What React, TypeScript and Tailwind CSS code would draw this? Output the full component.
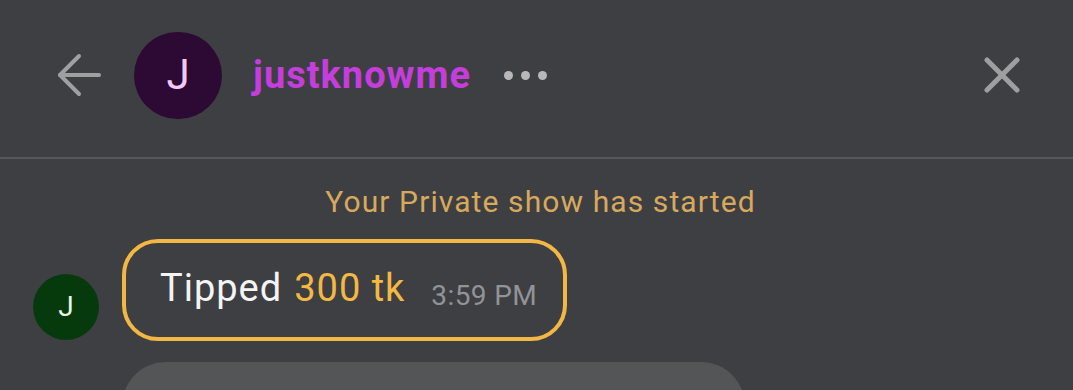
import React from "react";

const App: React.FC = () => {
  return (
    <div
      className="w-[1073px] h-[390px] overflow-hidden bg-[#3e3f43] flex flex-col"
      style={{ fontFamily: "Roboto, 'Liberation Sans', sans-serif" }}
    >
      {/* Header */}
      <div className="h-[157px] flex items-center pb-[7px] pl-[57px] pr-[53px] shrink-0">
        <svg width="44" height="44" viewBox="0 0 44 44" fill="none" stroke="#a0a0a2" strokeWidth="4" strokeLinecap="round" strokeLinejoin="round">
          <path d="M42 22H3" />
          <path d="M22 3L3 22l19 19" />
        </svg>
        <div className="ml-[33px] w-[88px] h-[87px] rounded-full bg-[#2c0a33] flex items-center justify-center text-[42px] leading-none text-[#f2c9f6]">
          J
        </div>
        <span className="ml-[31px] text-[38px] font-bold tracking-[1px] text-[#c63ddd] leading-none">
          justknowme
        </span>
        <div className="ml-[33px] flex gap-[8px]">
          <span className="w-[9px] h-[9px] rounded-full bg-[#b8b8ba]" />
          <span className="w-[9px] h-[9px] rounded-full bg-[#b8b8ba]" />
          <span className="w-[9px] h-[9px] rounded-full bg-[#b8b8ba]" />
        </div>
        <div className="flex-1" />
        <svg width="36" height="36" viewBox="0 0 36 36" fill="none" stroke="#9f9fa1" strokeWidth="5" strokeLinecap="round">
          <path d="M3 3l30 30" />
          <path d="M33 3L3 33" />
        </svg>
      </div>
      <div className="h-[2px] bg-[#56575b] shrink-0" />

      {/* Chat */}
      <div className="flex-1 flex flex-col">
        <div className="mt-[26px] pl-[8px] text-center text-[30px] tracking-[1.1px] text-[#d8a95c] leading-[34px]">
          Your Private show has started
        </div>
        <div className="mt-[20px] flex items-end pl-[33px]">
          <div className="w-[66px] h-[66px] rounded-full bg-[#063a0d] flex items-center justify-center text-[28px] leading-none text-[#e6f7e3] mb-[1px]">
            J
          </div>
          <div className="ml-[23px] h-[102px] rounded-[36px] border-[4px] border-[#f2b843] flex items-center pl-[34px] pr-[26px]">
            <div className="flex items-baseline pb-[4px]">
              <span className="text-[38px] leading-none tracking-[1px] text-[#f4f4f4]">Tipped</span>
              <span className="ml-[12px] text-[38px] leading-none tracking-[1px] text-[#f4b942]">300 tk</span>
              <span className="ml-[26px] text-[28px] leading-none tracking-[0.4px] text-[#929396] translate-y-[4px]">3:59 PM</span>
            </div>
          </div>
        </div>
        <div className="mt-[21px] ml-[122px] w-[623px] h-[60px] rounded-t-[44px] bg-[#545557] shrink-0" />
      </div>
    </div>
  );
};

export default App;
